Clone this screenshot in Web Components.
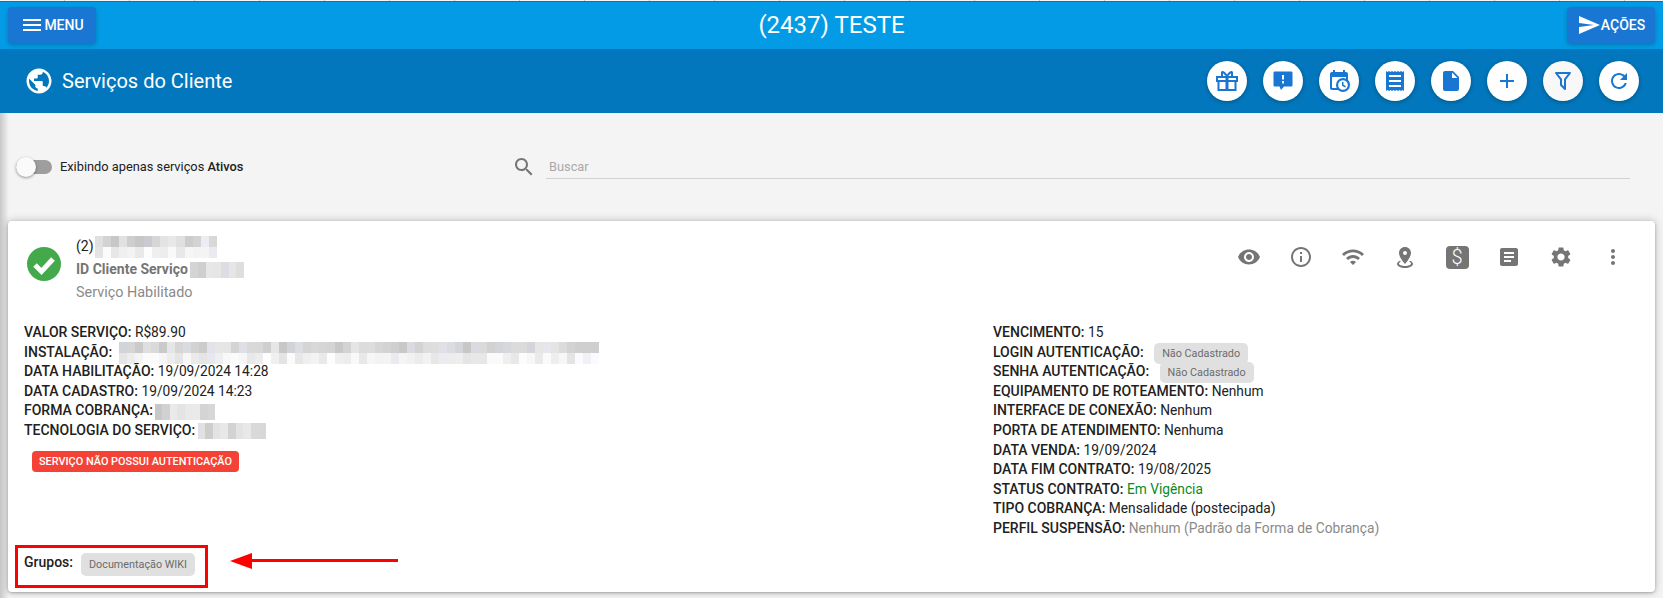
<!DOCTYPE html>
<html lang="pt-BR">
<head>
<meta charset="utf-8">
<title>Serviços do Cliente</title>
<style>
  html, body { margin: 0; height: 598px; overflow: hidden; }
  body {
    font-family: Roboto, "Liberation Sans", sans-serif;
    background: linear-gradient(90deg, #c8c8c8, #f4f4f4 9px);
  }
</style>
</head>
<body>
<app-topbar heading="(2437) TESTE"></app-topbar>
<page-header heading="Serviços do Cliente">
  <round-btn icon="gift"></round-btn>
  <round-btn icon="feedback"></round-btn>
  <round-btn icon="calendar"></round-btn>
  <round-btn icon="receipt"></round-btn>
  <round-btn icon="file"></round-btn>
  <round-btn icon="plus"></round-btn>
  <round-btn icon="filter" soft></round-btn>
  <round-btn icon="refresh"></round-btn>
</page-header>
<filter-bar></filter-bar>
<service-card>
  <field-row slot="left" label="VALOR SERVIÇO:">R$89.90</field-row>
  <field-row slot="left" label="INSTALAÇÃO:"><pixel-mask cols="60" seed="3" style="margin-left:3px"></pixel-mask></field-row>
  <field-row slot="left" label="DATA HABILITAÇÃO:">19/09/2024 14:28</field-row>
  <field-row slot="left" label="DATA CADASTRO:">19/09/2024 14:23</field-row>
  <field-row slot="left" label="FORMA COBRANÇA:"><pixel-mask cols="8" cell="7.6" seed="7" rows="1" style="margin-left:-2px"></pixel-mask></field-row>
  <field-row slot="left" label="TECNOLOGIA DO SERVIÇO:"><pixel-mask cols="9" cell="7.6" seed="11" rows="1" style="margin-left:-1px"></pixel-mask></field-row>
  <alert-chip slot="left">SERVIÇO NÃO POSSUI AUTENTICAÇÃO</alert-chip>

  <field-row slot="right" label="VENCIMENTO:">15</field-row>
  <field-row slot="right" label="LOGIN AUTENTICAÇÃO:"><soft-chip style="margin-left:7px">Não Cadastrado</soft-chip></field-row>
  <field-row slot="right" label="SENHA AUTENTICAÇÃO:"><soft-chip style="margin-left:7px">Não Cadastrado</soft-chip></field-row>
  <field-row slot="right" label="EQUIPAMENTO DE ROTEAMENTO:">Nenhum</field-row>
  <field-row slot="right" label="INTERFACE DE CONEXÃO:">Nenhum</field-row>
  <field-row slot="right" label="PORTA DE ATENDIMENTO:">Nenhuma</field-row>
  <field-row slot="right" label="DATA VENDA:">19/09/2024</field-row>
  <field-row slot="right" label="DATA FIM CONTRATO:">19/08/2025</field-row>
  <field-row slot="right" label="STATUS CONTRATO:" tone="#0a8a1f">Em Vigência</field-row>
  <field-row slot="right" label="TIPO COBRANÇA:">Mensalidade (postecipada)</field-row>
  <field-row slot="right" label="PERFIL SUSPENSÃO:" tone="#8a8a8a">Nenhum (Padrão da Forma de Cobrança)</field-row>
</service-card>
<script>
const ICONS = {
  menu: "M3 18h18v-2H3v2zm0-5h18v-2H3v2zm0-7v2h18V6H3z",
  send: "M2.010 21L23 12 2.010 3 2 10l15 2-15 2z",
  earth: "M12 2C6.480 2 2 6.480 2 12s4.480 10 10 10 10-4.480 10-10S17.520 2 12 2zm-1 17.930c-3.950-.49-7-3.850-7-7.930 0-.62.08-1.210.21-1.790L9 15v1c0 1.100.9 2 2 2v1.930zm6.900-2.540c-.26-.81-1-1.390-1.900-1.390h-1v-3c0-.55-.45-1-1-1H8v-2h2c.55 0 1-.45 1-1V7h2c1.100 0 2-.9 2-2v-.41c2.930 1.190 5 4.060 5 7.410 0 2.080-.8 3.970-2.100 5.390z",
  gift: "M1 7h22v6h-1.500v9h-19v-9H1V7zM3 9v2h7.500V9H3zM13.500 9v2H21V9h-7.500zM4.500 13v7h6v-7h-6zM13.500 13v7h6v-7h-6zM6 7V3.500C6 2.500 6.800 2 7.500 2c1.500 0 3 1.500 4.500 3.500C13.500 3.500 15 2 16.500 2c.7 0 1.500.5 1.500 1.500V7h-2V4.300c-.9.6-1.800 1.600-2.800 2.700h-2.400C9.800 5.900 8.900 4.900 8 4.300V7H6z",
  feedback: "M4 2.500h16c1 0 1.500.5 1.500 1.500v12c0 1-.5 1.500-1.500 1.500h-7l-3 3.500-1.500-3.500H4c-1 0-1.500-.5-1.500-1.500V4c0-1 .5-1.500 1.500-1.500zM11 6h2v4.500h-2zM11 12h2v2.500h-2z",
  calendar: "M15,13H16.500V15.820L18.940,17.230L18.190,18.530L15,16.690V13M19,8H5V19H9.670C9.240,18.090 9,17.070 9,16A7,7 0 0,1 16,9C17.070,9 18.090,9.240 19,9.670V8M5,21C3.890,21 3,20.100 3,19V5C3,3.890 3.890,3 5,3H6V1H8V3H16V1H18V3H19A2,2 0 0,1 21,5V11.100C22.240,12.360 23,14.090 23,16A7,7 0 0,1 16,23C14.090,23 12.360,22.240 11.100,21H5M16,11.150A4.850,4.850 0 0,0 11.150,16C11.150,18.680 13.320,20.850 16,20.850A4.850,4.850 0 0,0 20.850,16C20.850,13.320 18.680,11.150 16,11.150Z",
  receipt: "M3 2l1.500 1L6 2l1.500 1L9 2l1.500 1L12 2l1.500 1L15 2l1.500 1L18 2l1.500 1L21 2v20l-1.500-1-1.500 1-1.500-1-1.500 1-1.500-1-1.500 1-1.500-1L9 22l-1.500-1L6 22l-1.500-1L3 22V2zm3 4v2h12V6H6zm0 5v2h12v-2H6zm0 5v2h12v-2H6z",
  file: "M6 2c-1.100 0-1.990.9-1.990 2L4 20c0 1.100.89 2 1.990 2H18c1.100 0 2-.9 2-2V8l-6-6H6zm7 7V3.500L18.500 9H13z",
  plus: "M19 13h-6v6h-2v-6H5v-2h6V5h2v6h6v2z",
  filter: "M15,19.880C15.040,20.180 14.940,20.500 14.710,20.710C14.320,21.100 13.690,21.100 13.300,20.710L9.290,16.700C9.060,16.470 8.960,16.160 9,15.870V10.750L4.210,4.620C3.870,4.190 3.950,3.560 4.380,3.220C4.570,3.080 4.780,3 5,3V3H19V3C19.220,3 19.430,3.080 19.620,3.220C20.050,3.560 20.130,4.190 19.790,4.620L15,10.750V19.880M7.040,5L11,10.060V15.580L13,17.580V10.050L16.960,5H7.040Z",
  refresh: "M17.650 6.350C16.200 4.900 14.210 4 12 4c-4.420 0-7.990 3.580-7.990 8s3.570 8 7.990 8c3.730 0 6.840-2.550 7.730-6h-2.080c-.82 2.330-3.040 4-5.650 4-3.310 0-6-2.690-6-6s2.690-6 6-6c1.660 0 3.140.69 4.220 1.780L13 11h7V4l-2.350 2.350z",
  search: "M15.500 14h-.79l-.28-.27C15.410 12.590 16 11.110 16 9.500 16 5.910 13.090 3 9.500 3S3 5.910 3 9.500 5.910 16 9.500 16c1.610 0 3.090-.59 4.230-1.570l.27.28v.79l5 4.990L20.490 19l-4.990-5zm-6 0C7.010 14 5 11.990 5 9.500S7.010 5 9.500 5 14 7.010 14 9.500 11.990 14 9.500 14z",
  eye: "M12 4.500C7 4.500 2.730 7.610 1 12c1.730 4.390 6 7.500 11 7.500s9.270-3.110 11-7.500c-1.730-4.390-6-7.500-11-7.500zM12 17c-2.760 0-5-2.240-5-5s2.240-5 5-5 5 2.240 5 5-2.240 5-5 5zm0-8c-1.660 0-3 1.340-3 3s1.340 3 3 3 3-1.340 3-3-1.340-3-3-3z",
  info: "M11 7h2v2h-2zm0 4h2v6h-2zm1-9C6.480 2 2 6.480 2 12s4.480 10 10 10 10-4.480 10-10S17.520 2 12 2zm0 18c-4.410 0-8-3.590-8-8s3.590-8 8-8 8 3.590 8 8-3.590 8-8 8z",
  wifi: "M1 9l2 2c4.970-4.970 13.030-4.970 18 0l2-2C16.930 2.930 7.080 2.930 1 9zm8 8l3 3 3-3c-1.650-1.660-4.340-1.660-6 0zm-4-4l2 2c2.760-2.760 7.240-2.760 10 0l2-2C15.140 9.140 8.870 9.140 5 13z",
  pin: "M12,2C15.310,2 18,4.660 18,7.950C18,12.410 12,19 12,19C12,19 6,12.410 6,7.950C6,4.660 8.690,2 12,2M12,6A2,2 0 0,0 10,8A2,2 0 0,0 12,10A2,2 0 0,0 14,8A2,2 0 0,0 12,6M20,19C20,21.210 16.420,23 12,23C7.580,23 4,21.210 4,19C4,17.710 5.220,16.560 7.110,15.830L7.750,16.740C6.670,17.190 6,17.810 6,18.500C6,19.880 8.690,21 12,21C15.310,21 18,19.880 18,18.500C18,17.810 17.330,17.190 16.250,16.740L16.890,15.830C18.780,16.560 20,17.710 20,19Z",
  article: "M19 3H5c-1.100 0-2 .9-2 2v14c0 1.100.9 2 2 2h14c1.100 0 2-.9 2-2V5c0-1.100-.9-2-2-2zm-5 14H7v-2h7v2zm3-4H7v-2h10v2zm0-4H7V7h10v2z",
  gear: "M19.140 12.940c.04-.3.06-.61.06-.94 0-.32-.02-.64-.07-.94l2.030-1.580c.18-.14.23-.41.12-.61l-1.920-3.320c-.12-.22-.37-.29-.59-.22l-2.390.96c-.5-.38-1.030-.7-1.620-.94l-.36-2.540c-.04-.24-.24-.41-.48-.41h-3.840c-.24 0-.43.17-.47.41l-.36 2.540c-.59.24-1.130.57-1.620.94l-2.390-.96c-.22-.08-.47 0-.59.22L2.740 8.870c-.12.21-.08.47.12.61l2.030 1.580c-.05.3-.09.63-.09.94s.02.64.07.94l-2.030 1.580c-.18.14-.23.41-.12.61l1.920 3.320c.12.22.37.29.59.22l2.390-.96c.5.38 1.030.7 1.620.94l.36 2.540c.05.24.24.41.48.41h3.840c.24 0 .44-.17.47-.41l.36-2.540c.59-.24 1.130-.56 1.620-.94l2.390.96c.22.08.47 0 .59-.22l1.920-3.320c.12-.22.07-.47-.12-.61l-2.010-1.580zM12 15.600c-1.980 0-3.600-1.620-3.600-3.600s1.620-3.600 3.600-3.600 3.600 1.620 3.600 3.600-1.620 3.600-3.600 3.600z",
  more: "M12 8c1.100 0 2-.9 2-2s-.9-2-2-2-2 .9-2 2 .9 2 2 2zm0 2c-1.100 0-2 .9-2 2s.9 2 2 2 2-.9 2-2-.9-2-2-2zm0 6c-1.100 0-2 .9-2 2s.9 2 2 2 2-.9 2-2-.9-2-2-2z"
};

class UiIcon extends HTMLElement {
  connectedCallback() {
    const size = this.getAttribute("size") || 24;
    this.attachShadow({ mode: "open" }).innerHTML = `
      <style>:host { display: inline-flex; flex: none; } svg { display: block; fill: currentColor; }</style>
      <svg width="${size}" height="${size}" viewBox="0 0 24 24"><path fill-rule="evenodd" d="${ICONS[this.getAttribute("name")]}"/></svg>`;
  }
}

class BarButton extends HTMLElement {
  connectedCallback() {
    this.attachShadow({ mode: "open" }).innerHTML = `
      <style>
        :host {
          display: flex; align-items: center; justify-content: center;
          box-sizing: border-box; width: 88px; height: 36px;
          background: #1976d2; border-radius: 4px; color: #fff;
          font-size: 14px; font-weight: 500;
          box-shadow: 0 2px 4px rgba(0,0,0,.22);
        }
      </style>
      <ui-icon name="${this.getAttribute("icon")}" size="${this.getAttribute("size") || 24}"></ui-icon><slot></slot>`;
  }
}

class AppTopbar extends HTMLElement {
  connectedCallback() {
    this.attachShadow({ mode: "open" }).innerHTML = `
      <style>
        :host {
          display: grid; grid-template-columns: 1fr auto 1fr; align-items: center;
          box-sizing: border-box; height: 49px; padding: 0 8px 1px;
          color: #fff; background: #039be5;
          border-top: 2px solid #0277bd; position: relative;
        }
        :host::before {
          content: ""; position: absolute; left: 0; right: 0; top: -2px; height: 1px;
          background: repeating-linear-gradient(90deg, #f2f4f5 0 64px, #c4ccd0 64px 65px);
        }
        .end { justify-self: end; }
        h1 { margin: 0; font-size: 24px; font-weight: 400; }
      </style>
      <bar-button icon="menu">MENU</bar-button>
      <h1>${this.getAttribute("heading")}</h1>
      <bar-button class="end" icon="send">AÇÕES</bar-button>`;
  }
}

class RoundBtn extends HTMLElement {
  connectedCallback() {
    this.attachShadow({ mode: "open" }).innerHTML = `
      <style>
        :host {
          display: flex; align-items: center; justify-content: center;
          width: 40px; height: 40px; border-radius: 50%;
          background: ${this.hasAttribute("soft") ? "#f8f8f8" : "#fff"}; color: #1976d2;
          box-shadow: 0 1px 4px rgba(0,0,0,.3);
        }
      </style>
      <ui-icon name="${this.getAttribute("icon")}" size="24"></ui-icon>`;
  }
}

class PageHeader extends HTMLElement {
  connectedCallback() {
    this.attachShadow({ mode: "open" }).innerHTML = `
      <style>
        :host {
          display: flex; align-items: center; box-sizing: border-box;
          height: 64px; padding: 0 24px; background: #0277bd; color: #fff;
        }
        h2 { margin: 0 0 0 8px; font-size: 20px; font-weight: 400; flex: 1; }
        .actions { display: flex; gap: 16px; }
      </style>
      <ui-icon name="earth" size="30"></ui-icon>
      <h2>${this.getAttribute("heading")}</h2>
      <div class="actions"><slot></slot></div>`;
  }
}

class FilterBar extends HTMLElement {
  connectedCallback() {
    this.attachShadow({ mode: "open" }).innerHTML = `
      <style>
        :host {
          display: flex; align-items: center; box-sizing: border-box;
          height: 108px; padding: 0 33px 0 16px; font-size: 12.8px; color: #212121;
        }
        .toggle { position: relative; width: 36px; height: 14px; margin-right: 8px; background: #9e9e9e; border-radius: 7px; flex: none; }
        .toggle::after {
          content: ""; position: absolute; left: 0; top: -3px; width: 20px; height: 20px;
          border-radius: 50%; background: #fafafa; box-shadow: 0 1px 3px rgba(0,0,0,.4);
        }
        .label { width: 452px; flex: none; margin-bottom: 2px; }
        b { font-weight: 500; }
        ui-icon { color: #757575; margin-right: 10px; }
        .search {
          flex: 1; height: 25px; box-sizing: border-box; padding: 3px 0 0 3px; margin-bottom: 2px;
          border-bottom: 1px solid #d2d2d2; color: #a9a9a9; line-height: 20px;
        }
      </style>
      <span class="toggle"></span>
      <span class="label">Exibindo apenas serviços <b>Ativos</b></span>
      <ui-icon name="search" size="24"></ui-icon>
      <div class="search">Buscar</div>`;
  }
}

class PixelMask extends HTMLElement {
  connectedCallback() {
    const cols = +this.getAttribute("cols");
    const rows = +(this.getAttribute("rows") || 2);
    const cell = this.getAttribute("cell") || 8;
    let n = +this.getAttribute("seed") * 97 + 13;
    const rnd = () => (n = (n * 137 + 59) % 1009) / 1009;
    let cells = "";
    for (let r = 0; r < rows; r++) {
      for (let c = 0; c < cols; c++) {
        const base = rows === 2 && r === 1 ? 228 : 198;
        const v = Math.round(base + rnd() * (rows === 2 && r === 1 ? 26 : 38));
        const tint = rnd() > .8 ? 7 : 0;
        cells += `<i style="background:rgb(${v},${v},${v + tint})"></i>`;
      }
    }
    this.attachShadow({ mode: "open" }).innerHTML = `
      <style>
        :host { display: inline-grid; grid-template-columns: repeat(${cols}, ${cell}px); grid-auto-rows: ${rows === 2 ? 11 : 16}px; vertical-align: middle; margin-block: -8px; }
      </style>${cells}`;
  }
}

class FieldRow extends HTMLElement {
  connectedCallback() {
    const tone = this.getAttribute("tone");
    this.attachShadow({ mode: "open" }).innerHTML = `
      <style>
        :host { display: block; height: 19.6px; line-height: 19.6px; font-size: 14px; color: #212121; white-space: nowrap; }
        b { font-weight: 500; }
        .v { font-size: 13.75px; ${tone ? `color:${tone};` : ""} }
      </style>
      <b>${this.getAttribute("label")}</b> <span class="v"><slot></slot></span>`;
  }
}

class SoftChip extends HTMLElement {
  constructor() {
    super();
    this.attachShadow({ mode: "open" }).innerHTML = `
      <style>
        :host {
          display: inline-block; padding: 0 8px; height: 21px; line-height: 21px;
          background: #e0e0e0; border-radius: 5px; color: #6b6b6b; font-size: 10.8px; font-weight: 400;
          vertical-align: middle;
        }
      </style><slot></slot>`;
  }
}

class AlertChip extends HTMLElement {
  constructor() {
    super();
    this.attachShadow({ mode: "open" }).innerHTML = `
      <style>
        :host {
          display: block; width: max-content; margin: 10px 0 0 8px; padding: 0 7px; height: 21px; line-height: 21px;
          background: #f44336; border-radius: 4px; color: #fff; font-size: 10.9px; font-weight: 500;
        }
      </style><slot></slot>`;
  }
}

class ServiceCard extends HTMLElement {
  connectedCallback() {
    const tools = ["eye", "info", "wifi", "pin", "$", "article", "gear", "more"];
    this.attachShadow({ mode: "open" }).innerHTML = `
      <style>
        :host {
          display: flex; flex-direction: column; box-sizing: border-box; position: relative;
          height: 371px; margin: 0 8px; padding: 14px 16px 16px;
          background: #fff; border-radius: 4px; font-size: 14px; color: #212121;
          box-shadow: 0 0 10px rgba(0,0,0,.22), 0 1px 3px rgba(0,0,0,.25);
        }
        .head { display: flex; align-items: flex-start; height: 88px; }
        .status { width: 34px; height: 34px; margin: 12px 15px 0 3px; flex: none; }
        .lines { flex: 1; line-height: 23px; }
        .lines div { height: 23px; white-space: nowrap; }
        .id { font-weight: 700; color: #757575; }
        .state { color: #8a8a8a; font-size: 14.4px; }
        .tools { display: flex; color: #757575; margin-top: 10px; }
        .tools > span { display: flex; width: 52px; justify-content: center; align-items: center; height: 24px; }
        .money { width: 23px; height: 23px; background: #757575; border-radius: 4px; color: #fff; font-size: 20px; font-weight: 300; display: flex; align-items: center; justify-content: center; }
        .cols { display: grid; grid-template-columns: 60% 40%; }
        .groups { display: flex; align-items: flex-start; margin-top: auto; color: #212121; }
        .groups b { font-weight: 500; margin-right: 8px; line-height: 18px; }
        .note { position: absolute; left: 7px; top: 324px; width: 193px; height: 43px; box-sizing: border-box; border: 3px solid #f00; }
        .arrow { position: absolute; left: 222px; top: 331px; }
      </style>
      <div class="head">
        <svg class="status" viewBox="0 0 34 34"><circle cx="17" cy="17" r="17" fill="#43a94b"/><path d="M8 18l6.500 6.500L26 12" fill="none" stroke="#fff" stroke-width="5"/></svg>
        <div class="lines">
          <div>(2)<pixel-mask cols="15" cell="8.2" seed="5" style="margin-left:1px"></pixel-mask></div>
          <div class="id">ID Cliente Serviço <pixel-mask cols="7" cell="7.700" seed="9" rows="1" style="margin-left:-1px"></pixel-mask></div>
          <div class="state">Serviço Habilitado</div>
        </div>
        <div class="tools">
          ${tools.map(t => t === "$" ? `<span><span class="money">$</span></span>` : `<span><ui-icon name="${t}" size="24"></ui-icon></span>`).join("")}
        </div>
      </div>
      <div class="cols">
        <div><slot name="left"></slot></div>
        <div><slot name="right"></slot></div>
      </div>
      <div class="groups"><b>Grupos:</b><soft-chip style="height:23px;line-height:23px">Documentação WIKI</soft-chip></div>
      <div class="note"></div>
      <svg class="arrow" width="170" height="22" viewBox="0 0 170 22"><path d="M0 9L22 1V7H168V10H22V17z" fill="#f00"/></svg>`;
  }
}

customElements.define("ui-icon", UiIcon);
customElements.define("bar-button", BarButton);
customElements.define("app-topbar", AppTopbar);
customElements.define("round-btn", RoundBtn);
customElements.define("page-header", PageHeader);
customElements.define("filter-bar", FilterBar);
customElements.define("pixel-mask", PixelMask);
customElements.define("field-row", FieldRow);
customElements.define("soft-chip", SoftChip);
customElements.define("alert-chip", AlertChip);
customElements.define("service-card", ServiceCard);
</script>
</body>
</html>
